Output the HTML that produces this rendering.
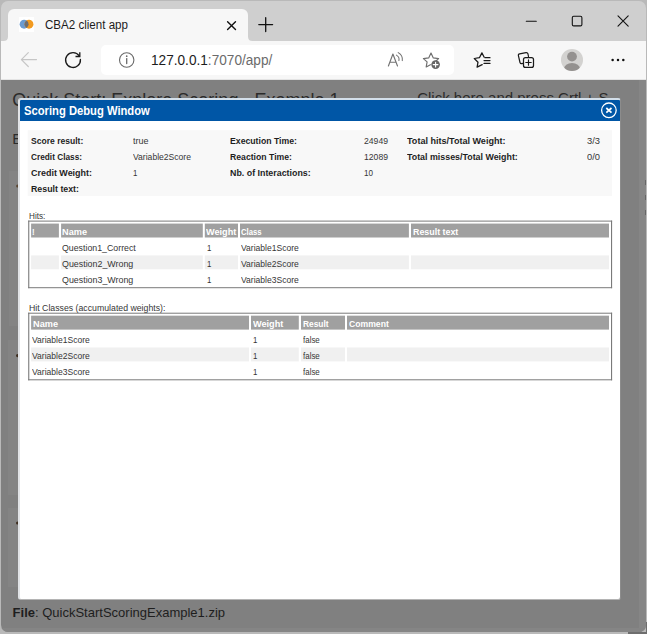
<!DOCTYPE html>
<html><head><meta charset="utf-8">
<style>
*{box-sizing:border-box;margin:0;padding:0}
html,body{width:647px;height:634px;overflow:hidden;background:#b9b9b9;font-family:"Liberation Sans",sans-serif;}
.a{position:absolute}
#win{position:absolute;left:1px;top:1px;width:645px;height:631px;border-radius:7px;background:#cfcfcf;overflow:hidden}
/* everything inside #ov uses full-image coordinates */
#ov{position:absolute;left:-1px;top:-1px;width:647px;height:634px}
.t{position:absolute;white-space:nowrap;line-height:12px;transform-origin:0 50%}
.hc{position:absolute;background:#a0a0a0;height:14px}
.ac{position:absolute;background:#f0f0f0;height:14px}
.tb{position:absolute;border:1px solid #9c9c9c;background:#fff}
svg{position:absolute;overflow:visible}
</style></head><body>
<div class="a" style="left:628px;top:632px;width:19px;height:2px;background:#6e6e6e"></div><div class="a" style="left:646px;top:622px;width:1px;height:12px;background:#6e6e6e"></div>
<div id="win"><div id="ov">
  <!-- tab -->
  <div class="a" style="left:8px;top:9px;width:240px;height:32px;background:#f7f7f7;border-radius:6px 6px 0 0"></div>
  <svg style="left:0;top:0" width="647" height="80">
    <path d="M3.5 41 Q8 41 8 36.5 L8 41Z" fill="#f7f7f7"/>
    <path d="M248 36.5 Q248 41 252.5 41 L248 41Z" fill="#f7f7f7"/>
  </svg>
  <!-- favicon -->
  <div class="a" style="left:19px;top:17px;width:15px;height:15px;background:#fff"></div>
  <svg style="left:0;top:0" width="60" height="40">
    <circle cx="24.1" cy="24.2" r="4.45" fill="#6b9bd1"/>
    <circle cx="29" cy="24.2" r="4.45" fill="#f29a1f"/>
    <path d="M26.55 20.48 A4.45 4.45 0 0 1 26.55 27.92 A4.45 4.45 0 0 1 26.55 20.48Z" fill="#6e6e72"/>
  </svg>
  <div class="t" style="left:45.3px;top:17.7px;font-size:12px;line-height:14px;color:#1c1c1c;transform:scaleX(.964)">CBA2 client app</div>
  <!-- tab close / new tab / window buttons -->
  <svg style="left:0;top:0" width="647" height="40" fill="none" stroke="#111" stroke-width="1.25" stroke-linecap="round">
    <path d="M227.6 21.7 L235.5 29.5 M235.5 21.7 L227.6 29.5" stroke-width="1.4"/>
    <path d="M258.8 24.6 H272.6 M265.7 17.7 V31.5" stroke-width="1.3"/>
    <path d="M526.3 21.3 H536.3" stroke-width="1.1"/>
    <rect x="572.3" y="16.3" width="9.6" height="9.6" rx="1.4" stroke-width="1.1"/>
    <path d="M618 15.9 L628.2 26.1 M628.2 15.9 L618 26.1" stroke-width="1.1"/>
  </svg>
  <!-- toolbar -->
  <div class="a" style="left:0;top:41px;width:647px;height:38px;background:#f7f7f7"></div>
  <div class="a" style="left:0;top:78.5px;width:647px;height:1px;background:#e4e4e4"></div>
  <div class="a" style="left:101px;top:45px;width:353px;height:30px;background:#fff;border-radius:5px"></div>
  <svg style="left:0;top:0" width="647" height="80" fill="none" stroke-linecap="round" stroke-linejoin="round">
    <!-- back -->
    <path d="M36.5 59.6 H21.6 M28.3 52.7 L21.4 59.6 L28.3 66.5" stroke="#c6c6c6" stroke-width="1.2"/>
    <!-- refresh -->
    <path d="M80.4 59.5 A7.4 7.4 0 1 1 79.2 56" stroke="#1a1a1a" stroke-width="1.35"/>
    <path d="M79.8 52.2 V56.5 H75.5" stroke="#1a1a1a" stroke-width="1.35" stroke-linecap="butt" stroke-linejoin="miter"/>
    <!-- info -->
    <circle cx="126.7" cy="60" r="7.2" stroke="#6a6a6a" stroke-width="1.1"/>
    <path d="M126.7 58.6 V63.6" stroke="#6a6a6a" stroke-width="1.3"/>
    <circle cx="126.7" cy="56.2" r=".85" fill="#6a6a6a"/>
    <!-- read aloud -->
    <path d="M388.4 66 L392.9 54 L397.5 66 M390 62.2 H395.9" stroke="#737373" stroke-width="1.15"/>
    <path d="M396.4 55.1 A5 5 0 0 1 398.9 60.6 M398.2 52.6 A8 8 0 0 1 402.3 60.6" stroke="#737373" stroke-width="1.05"/>
    <!-- add favourite star -->
    <path d="M431 53 L433.3 57.9 L438.6 58.6 L434.9 62 M430.4 64.7 L426.2 66.9 L427.1 61.9 L423.4 58.6 L428.7 57.9 L431 53" stroke="#6e6e6e" stroke-width="1.15"/>
    <circle cx="435.6" cy="64.6" r="4.3" fill="#666" stroke="none"/>
    <path d="M433.2 64.6 H438 M435.6 62.2 V67" stroke="#fff" stroke-width="1.1"/>
    <!-- favourites -->
    <path d="M482.2 64.6 L477.1 67.1 L478 62.2 L474.3 58.5 L479.4 57.7 L481.9 52.9 L484.2 57.2" stroke="#1a1a1a" stroke-width="1.25"/>
    <path d="M485 57.7 H490 M484 60.6 H490 M484 63.4 H490" stroke="#1a1a1a" stroke-width="1.2"/>
    <!-- collections -->
    <path d="M523.2 63.4 L521.8 63.7 Q520.4 63.9 520 62.5 L518.4 55.6 Q518.1 54.1 519.6 53.8 L526 52.7 Q527.6 52.5 528 54 L528.5 56.6" stroke="#1a1a1a" stroke-width="1.2"/>
    <rect x="523.5" y="57.6" width="10" height="9.8" rx="2" stroke="#1a1a1a" stroke-width="1.25"/>
    <path d="M525.8 62.5 H531.2 M528.5 59.8 V65.2" stroke="#1a1a1a" stroke-width="1.2"/>
    <!-- avatar -->
    <clipPath id="av"><circle cx="572" cy="59.9" r="11"/></clipPath>
    <circle cx="572" cy="59.9" r="11" fill="#d3d2d0"/>
    <circle cx="572" cy="56.6" r="4.9" fill="#94918f"/>
    <ellipse cx="572" cy="68.9" rx="8.1" ry="5.8" fill="#94918f" clip-path="url(#av)"/>
    <!-- more -->
    <circle cx="612.6" cy="60" r="1.25" fill="#111"/><circle cx="618" cy="60" r="1.25" fill="#111"/><circle cx="623.3" cy="60" r="1.25" fill="#111"/>
  </svg>
  <div class="t" style="left:150.6px;top:50.7px;font-size:14px;line-height:18px;color:#1d1d1d;transform:scaleX(.974)">127.0.0.1<span style="color:#6b6b6b">:7070/app/</span></div>
  <!-- page (dimmed) -->
  <div class="a" style="left:0;top:79.5px;width:647px;height:554px;background:#808080;overflow:hidden"></div>
  <div class="a" style="left:639px;top:80px;width:8px;height:554px;background:#868686"></div>
  <div class="a" style="left:0;top:628px;width:647px;height:6px;background:#858585"></div>
  <div class="a" style="left:8.5px;top:171px;width:12px;height:155px;background:#848484"></div>
  <div class="a" style="left:7.5px;top:340px;width:13px;height:155px;background:#848484"></div>
  <div class="a" style="left:7.5px;top:508px;width:13px;height:79px;background:#848484"></div>
  <svg style="left:0;top:0" width="647" height="634"><circle cx="17.6" cy="186" r="1.5" fill="#5a4632"/><circle cx="17.6" cy="355.6" r="1.6" fill="#3c2c1e"/><circle cx="17.6" cy="523" r="1.6" fill="#3c2c1e"/>
    <rect x="645.6" y="180" width="1.4" height="5" fill="#333"/><rect x="645.6" y="195" width="1.4" height="5" fill="#333"/><rect x="645.6" y="210" width="1.4" height="5" fill="#333"/></svg>
  <div class="t" style="left:12.2px;top:129.9px;font-size:15px;line-height:18px;color:#2b2b2b">Example</div>
  <div class="t" style="left:12.3px;top:89px;font-size:18px;line-height:22px;color:#2b2b2b">Quick Start: Explore Scoring - Example 1</div>
  <div class="t" style="left:417.2px;top:89.2px;font-size:15px;line-height:18px;color:#2b2b2b">Click here and press Crtl + S</div>
  <div class="t" style="left:12.6px;top:603.6px;font-size:13px;line-height:18px;color:#1e1e1e"><b>File</b>: QuickStartScoringExample1.zip</div>
  <!-- dialog -->
  <div class="a" style="left:18px;top:98px;width:603px;height:502px;background:#fff;border-radius:3px;border-style:solid;border-width:2px 1px 1px 2px;border-color:#d3dfea #8c8c8c #b4b4b4 #e1e3e6"></div>
  <div class="a" style="left:20px;top:100px;width:600px;height:21px;background:#0056a6;border-radius:1px 1px 0 0"></div>
  <div class="t" style="left:24px;top:103.8px;font-size:12px;line-height:14px;font-weight:bold;color:#fff;transform:scaleX(.935)">Scoring Debug Window</div>
  <svg style="left:0;top:0" width="647" height="130" fill="none" stroke="#fff">
    <circle cx="608.9" cy="110.3" r="7.3" stroke-width="1.3"/>
    <path d="M606.3 108 L611.5 112.6 M611.5 108 L606.3 112.6" stroke-width="1.7"/>
  </svg>
  <svg style="left:0;top:0" width="647" height="634" shape-rendering="auto">
    <rect x="27.7" y="130.2" width="584.4" height="65.8" fill="#f8f8f8"/>
    <rect x="28.2" y="220.60" width="583.9" height="67.59" fill="#fff" stroke="none"/>
    <rect x="28.2" y="220.60" width="583.9" height="1" fill="#7a7a7a"/>
    <rect x="28.2" y="287.20" width="583.9" height="1" fill="#7a7a7a"/>
    <rect x="28.2" y="220.60" width="1.1" height="67.59" fill="#7a7a7a"/>
    <rect x="611.0" y="220.60" width="1.1" height="67.59" fill="#7a7a7a"/>
    <rect x="31.1" y="223.58" width="27.8" height="13.92" fill="#a0a0a0"/>
    <rect x="31.1" y="255.39" width="27.8" height="13.92" fill="#f0f0f0"/>
    <rect x="61.1" y="223.58" width="141.7" height="13.92" fill="#a0a0a0"/>
    <rect x="61.1" y="255.39" width="141.7" height="13.92" fill="#f0f0f0"/>
    <rect x="204.8" y="223.58" width="33.2" height="13.92" fill="#a0a0a0"/>
    <rect x="204.8" y="255.39" width="33.2" height="13.92" fill="#f0f0f0"/>
    <rect x="240" y="223.58" width="168.9" height="13.92" fill="#a0a0a0"/>
    <rect x="240" y="255.39" width="168.9" height="13.92" fill="#f0f0f0"/>
    <rect x="411" y="223.58" width="198.0" height="13.92" fill="#a0a0a0"/>
    <rect x="411" y="255.39" width="198.0" height="13.92" fill="#f0f0f0"/>
    <rect x="28.2" y="312.70" width="583.9" height="67.59" fill="#fff" stroke="none"/>
    <rect x="28.2" y="312.70" width="583.9" height="1" fill="#7a7a7a"/>
    <rect x="28.2" y="379.30" width="583.9" height="1" fill="#7a7a7a"/>
    <rect x="28.2" y="312.70" width="1.1" height="67.59" fill="#7a7a7a"/>
    <rect x="611.0" y="312.70" width="1.1" height="67.59" fill="#7a7a7a"/>
    <rect x="31.1" y="315.68" width="217.9" height="13.92" fill="#a0a0a0"/>
    <rect x="31.1" y="347.49" width="217.9" height="13.92" fill="#f0f0f0"/>
    <rect x="251" y="315.68" width="47.8" height="13.92" fill="#a0a0a0"/>
    <rect x="251" y="347.49" width="47.8" height="13.92" fill="#f0f0f0"/>
    <rect x="301" y="315.68" width="44.0" height="13.92" fill="#a0a0a0"/>
    <rect x="301" y="347.49" width="44.0" height="13.92" fill="#f0f0f0"/>
    <rect x="347" y="315.68" width="262.0" height="13.92" fill="#a0a0a0"/>
    <rect x="347" y="347.49" width="262.0" height="13.92" fill="#f0f0f0"/>
  </svg>
<div class='t' style='left:31.0px;top:134.88px;font-size:9px;font-weight:bold;color:#1e1e1e;transform:scaleX(0.9504)'>Score result:</div>
<div class='t' style='left:31.0px;top:150.88px;font-size:9px;font-weight:bold;color:#1e1e1e;transform:scaleX(0.9184)'>Credit Class:</div>
<div class='t' style='left:31.0px;top:166.88px;font-size:9px;font-weight:bold;color:#1e1e1e;transform:scaleX(0.9944)'>Credit Weight:</div>
<div class='t' style='left:31.0px;top:182.88px;font-size:9px;font-weight:bold;color:#1e1e1e;transform:scaleX(0.9793)'>Result text:</div>
<div class='t' style='left:132.5px;top:134.88px;font-size:9px;font-weight:normal;color:#363636;transform:scaleX(0.9990)'>true</div>
<div class='t' style='left:132.5px;top:150.88px;font-size:9px;font-weight:normal;color:#363636;transform:scaleX(0.9528)'>Variable2Score</div>
<div class='t' style='left:133.0px;top:166.88px;font-size:9px;font-weight:normal;color:#363636;transform:scaleX(0.8700)'>1</div>
<div class='t' style='left:230.2px;top:134.88px;font-size:9px;font-weight:bold;color:#1e1e1e;transform:scaleX(0.9660)'>Execution Time:</div>
<div class='t' style='left:230.2px;top:150.88px;font-size:9px;font-weight:bold;color:#1e1e1e;transform:scaleX(0.9633)'>Reaction Time:</div>
<div class='t' style='left:230.2px;top:166.88px;font-size:9px;font-weight:bold;color:#1e1e1e;transform:scaleX(0.9840)'>Nb. of Interactions:</div>
<div class='t' style='left:363.5px;top:134.88px;font-size:9px;font-weight:normal;color:#363636;transform:scaleX(0.9588)'>24949</div>
<div class='t' style='left:363.5px;top:150.88px;font-size:9px;font-weight:normal;color:#363636;transform:scaleX(0.9588)'>12089</div>
<div class='t' style='left:363.5px;top:166.88px;font-size:9px;font-weight:normal;color:#363636;transform:scaleX(0.8986)'>10</div>
<div class='t' style='left:407.3px;top:134.88px;font-size:9px;font-weight:bold;color:#1e1e1e;transform:scaleX(1.0051)'>Total hits/Total Weight:</div>
<div class='t' style='left:407.3px;top:150.88px;font-size:9px;font-weight:bold;color:#1e1e1e;transform:scaleX(0.9848)'>Total misses/Total Weight:</div>
<div class='t' style='left:587.4px;top:134.88px;font-size:9px;font-weight:normal;color:#363636;transform:scaleX(1.0387)'>3/3</div>
<div class='t' style='left:587.4px;top:150.88px;font-size:9px;font-weight:normal;color:#363636;transform:scaleX(1.0387)'>0/0</div>
<div class='t' style='left:28.6px;top:209.71px;font-size:9.5px;font-weight:normal;color:#363636;transform:scaleX(0.8579)'>Hits:</div>
<div class='t' style='left:28.6px;top:302.04px;font-size:9.4px;font-weight:normal;color:#363636;transform:scaleX(0.9316)'>Hit Classes (accumulated weights):</div>
<div class='t' style='left:32.0px;top:225.88px;font-size:9px;font-weight:bold;color:#ffffff;transform:scaleX(0.8700)'>!</div>
<div class='t' style='left:62.3px;top:225.88px;font-size:9px;font-weight:bold;color:#ffffff;transform:scaleX(1.0198)'>Name</div>
<div class='t' style='left:206.2px;top:225.88px;font-size:9px;font-weight:bold;color:#ffffff;transform:scaleX(1.0153)'>Weight</div>
<div class='t' style='left:241.0px;top:225.88px;font-size:9px;font-weight:bold;color:#ffffff;transform:scaleX(0.8572)'>Class</div>
<div class='t' style='left:412.6px;top:225.88px;font-size:9px;font-weight:bold;color:#ffffff;transform:scaleX(0.9844)'>Result text</div>
<div class='t' style='left:62.4px;top:241.88px;font-size:9px;font-weight:normal;color:#363636;transform:scaleX(0.9769)'>Question1_Correct</div>
<div class='t' style='left:207.0px;top:241.88px;font-size:9px;font-weight:normal;color:#363636;transform:scaleX(0.8700)'>1</div>
<div class='t' style='left:241.0px;top:241.88px;font-size:9px;font-weight:normal;color:#363636;transform:scaleX(0.9495)'>Variable1Score</div>
<div class='t' style='left:62.4px;top:257.88px;font-size:9px;font-weight:normal;color:#363636;transform:scaleX(0.9849)'>Question2_Wrong</div>
<div class='t' style='left:207.0px;top:257.88px;font-size:9px;font-weight:normal;color:#363636;transform:scaleX(0.8700)'>1</div>
<div class='t' style='left:241.0px;top:257.88px;font-size:9px;font-weight:normal;color:#363636;transform:scaleX(0.9495)'>Variable2Score</div>
<div class='t' style='left:62.4px;top:273.88px;font-size:9px;font-weight:normal;color:#363636;transform:scaleX(0.9849)'>Question3_Wrong</div>
<div class='t' style='left:207.0px;top:273.88px;font-size:9px;font-weight:normal;color:#363636;transform:scaleX(0.8700)'>1</div>
<div class='t' style='left:241.0px;top:273.88px;font-size:9px;font-weight:normal;color:#363636;transform:scaleX(0.9495)'>Variable3Score</div>
<div class='t' style='left:32.5px;top:317.88px;font-size:9px;font-weight:bold;color:#ffffff;transform:scaleX(1.0198)'>Name</div>
<div class='t' style='left:252.6px;top:317.88px;font-size:9px;font-weight:bold;color:#ffffff;transform:scaleX(1.0153)'>Weight</div>
<div class='t' style='left:302.8px;top:317.88px;font-size:9px;font-weight:bold;color:#ffffff;transform:scaleX(0.9304)'>Result</div>
<div class='t' style='left:348.6px;top:317.88px;font-size:9px;font-weight:bold;color:#ffffff;transform:scaleX(0.9587)'>Comment</div>
<div class='t' style='left:32.3px;top:333.88px;font-size:9px;font-weight:normal;color:#363636;transform:scaleX(0.9495)'>Variable1Score</div>
<div class='t' style='left:253.3px;top:333.88px;font-size:9px;font-weight:normal;color:#363636;transform:scaleX(0.8700)'>1</div>
<div class='t' style='left:302.8px;top:333.88px;font-size:9px;font-weight:normal;color:#363636;transform:scaleX(0.8835)'>false</div>
<div class='t' style='left:32.3px;top:349.88px;font-size:9px;font-weight:normal;color:#363636;transform:scaleX(0.9495)'>Variable2Score</div>
<div class='t' style='left:253.3px;top:349.88px;font-size:9px;font-weight:normal;color:#363636;transform:scaleX(0.8700)'>1</div>
<div class='t' style='left:302.8px;top:349.88px;font-size:9px;font-weight:normal;color:#363636;transform:scaleX(0.8835)'>false</div>
<div class='t' style='left:32.3px;top:365.88px;font-size:9px;font-weight:normal;color:#363636;transform:scaleX(0.9495)'>Variable3Score</div>
<div class='t' style='left:253.3px;top:365.88px;font-size:9px;font-weight:normal;color:#363636;transform:scaleX(0.8700)'>1</div>
<div class='t' style='left:302.8px;top:365.88px;font-size:9px;font-weight:normal;color:#363636;transform:scaleX(0.8835)'>false</div>
</div></div>
</body></html>
